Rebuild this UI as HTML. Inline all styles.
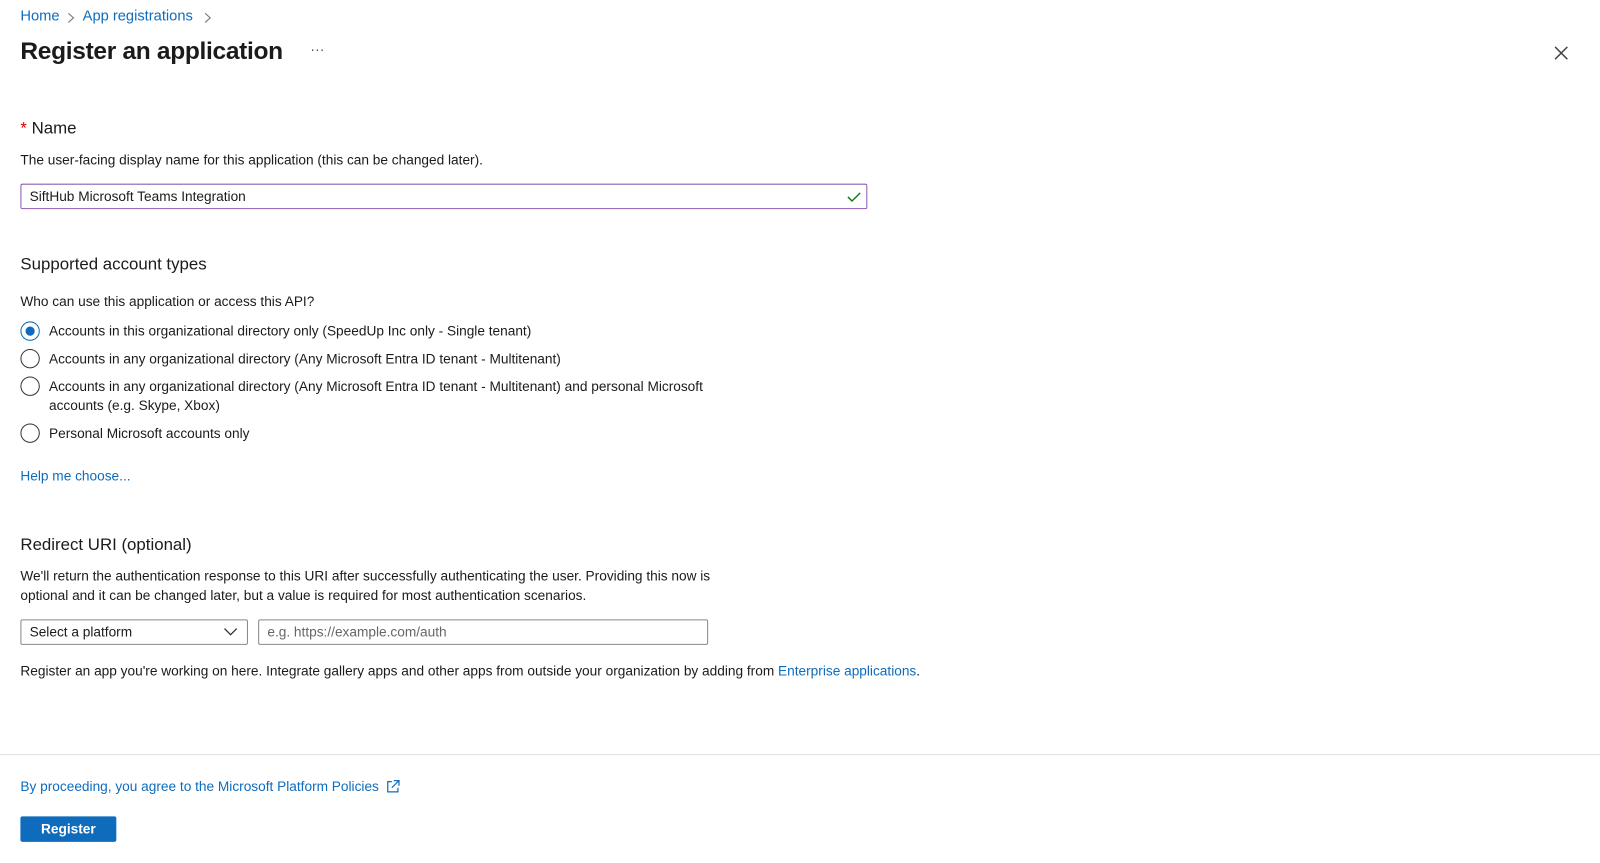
<!DOCTYPE html>
<html><head><meta charset="utf-8"><style>
*{margin:0;padding:0;box-sizing:border-box}
body{width:1600px;height:863px;background:#fff;font-family:"Liberation Sans",sans-serif;color:#1b1b1b;overflow:hidden}
#w{position:relative;width:1568px;height:846px;transform:scale(1.0204);transform-origin:0 0;font-size:13.4px}
.a{position:absolute;white-space:nowrap}
.l{color:#0f6cbd}
.radio{position:absolute;width:19px;height:19px;border:1.5px solid #333;border-radius:50%;left:20px}
.box{position:absolute;border:1px solid #8a8886;border-radius:2px;height:25px}
.h{font-size:16.5px}
</style></head><body><div id="w">
<div class="a l" style="left:20px;top:8px;font-size:14.4px">Home</div>
<svg class="a" style="left:66px;top:12px" width="7" height="11"><path d="M1 1L6 5.5L1 10" stroke="#777" stroke-width="1.1" fill="none"/></svg>
<div class="a l" style="left:81px;top:8px;font-size:14.4px">App registrations</div>
<svg class="a" style="left:200px;top:12px" width="7" height="11"><path d="M1 1L6 5.5L1 10" stroke="#777" stroke-width="1.1" fill="none"/></svg>
<div class="a" style="left:20px;top:37px;font-size:24px;font-weight:bold;letter-spacing:-0.3px">Register an application</div>
<div class="a" style="left:304px;top:40px;font-size:14px;color:#555">···</div>
<svg class="a" style="left:1523px;top:45px" width="14" height="14"><path d="M1 1L13 13M13 1L1 13" stroke="#444" stroke-width="1.4"/></svg>

<div class="a h" style="left:20px;top:117px"><span style="color:#d00">*</span> Name</div>
<div class="a" style="left:20px;top:149px">The user-facing display name for this application (this can be changed later).</div>
<div class="box" style="left:20px;top:180px;width:830px;border-color:#8c5bb5;"></div>
<div class="a" style="left:29px;top:185px">SiftHub Microsoft Teams Integration</div>
<svg class="a" style="left:830px;top:187px" width="14" height="12"><path d="M1 6L5 10L13 2" stroke="#107c10" stroke-width="1.4" fill="none"/></svg>

<div class="a h" style="left:20px;top:250px">Supported account types</div>
<div class="a" style="left:20px;top:288px">Who can use this application or access this API?</div>
<div class="radio" style="top:315px;border-color:#0f6cbd"><div style="position:absolute;left:3.5px;top:3.5px;width:9px;height:9px;border-radius:50%;background:#0f6cbd"></div></div>
<div class="a" style="left:48px;top:317px">Accounts in this organizational directory only (SpeedUp Inc only - Single tenant)</div>
<div class="radio" style="top:342px"></div>
<div class="a" style="left:48px;top:344px">Accounts in any organizational directory (Any Microsoft Entra ID tenant - Multitenant)</div>
<div class="radio" style="top:369px"></div>
<div class="a" style="left:48px;top:371px">Accounts in any organizational directory (Any Microsoft Entra ID tenant - Multitenant) and personal Microsoft</div>
<div class="a" style="left:48px;top:390px">accounts (e.g. Skype, Xbox)</div>
<div class="radio" style="top:415px"></div>
<div class="a" style="left:48px;top:417px">Personal Microsoft accounts only</div>
<div class="a l" style="left:20px;top:459px">Help me choose...</div>

<div class="a h" style="left:20px;top:525px">Redirect URI (optional)</div>
<div class="a" style="left:20px;top:557px">We'll return the authentication response to this URI after successfully authenticating the user. Providing this now is</div>
<div class="a" style="left:20px;top:576px">optional and it can be changed later, but a value is required for most authentication scenarios.</div>
<div class="box" style="left:20px;top:607px;width:223px"></div>
<div class="a" style="left:29px;top:612px">Select a platform</div>
<svg class="a" style="left:219px;top:615px" width="14" height="9"><path d="M1 1L7 7L13 1" stroke="#333" stroke-width="1.3" fill="none"/></svg>
<div class="box" style="left:253px;top:607px;width:441px"></div>
<div class="a" style="left:262px;top:612px;color:#666">e.g. https://example.com/auth</div>
<div class="a" style="left:20px;top:650px">Register an app you're working on here. Integrate gallery apps and other apps from outside your organization by adding from <span class="l">Enterprise applications</span>.</div>

<div class="a" style="left:0;top:739px;width:1600px;height:1px;background:#e1e1e1"></div>
<div class="a l" style="left:20px;top:763px">By proceeding, you agree to the Microsoft Platform Policies</div>
<svg class="a" style="left:378px;top:764px" width="14" height="14"><path d="M6 2H2V12H12V8M8 1H13V6M13 1L6 8" stroke="#0f6cbd" stroke-width="1.2" fill="none"/></svg>
<div class="a" style="left:20px;top:800px;width:94px;height:25px;background:#0f6cbd;border-radius:2px;color:#fff;font-weight:bold;text-align:center;line-height:25px">Register</div>
</div></body></html>
